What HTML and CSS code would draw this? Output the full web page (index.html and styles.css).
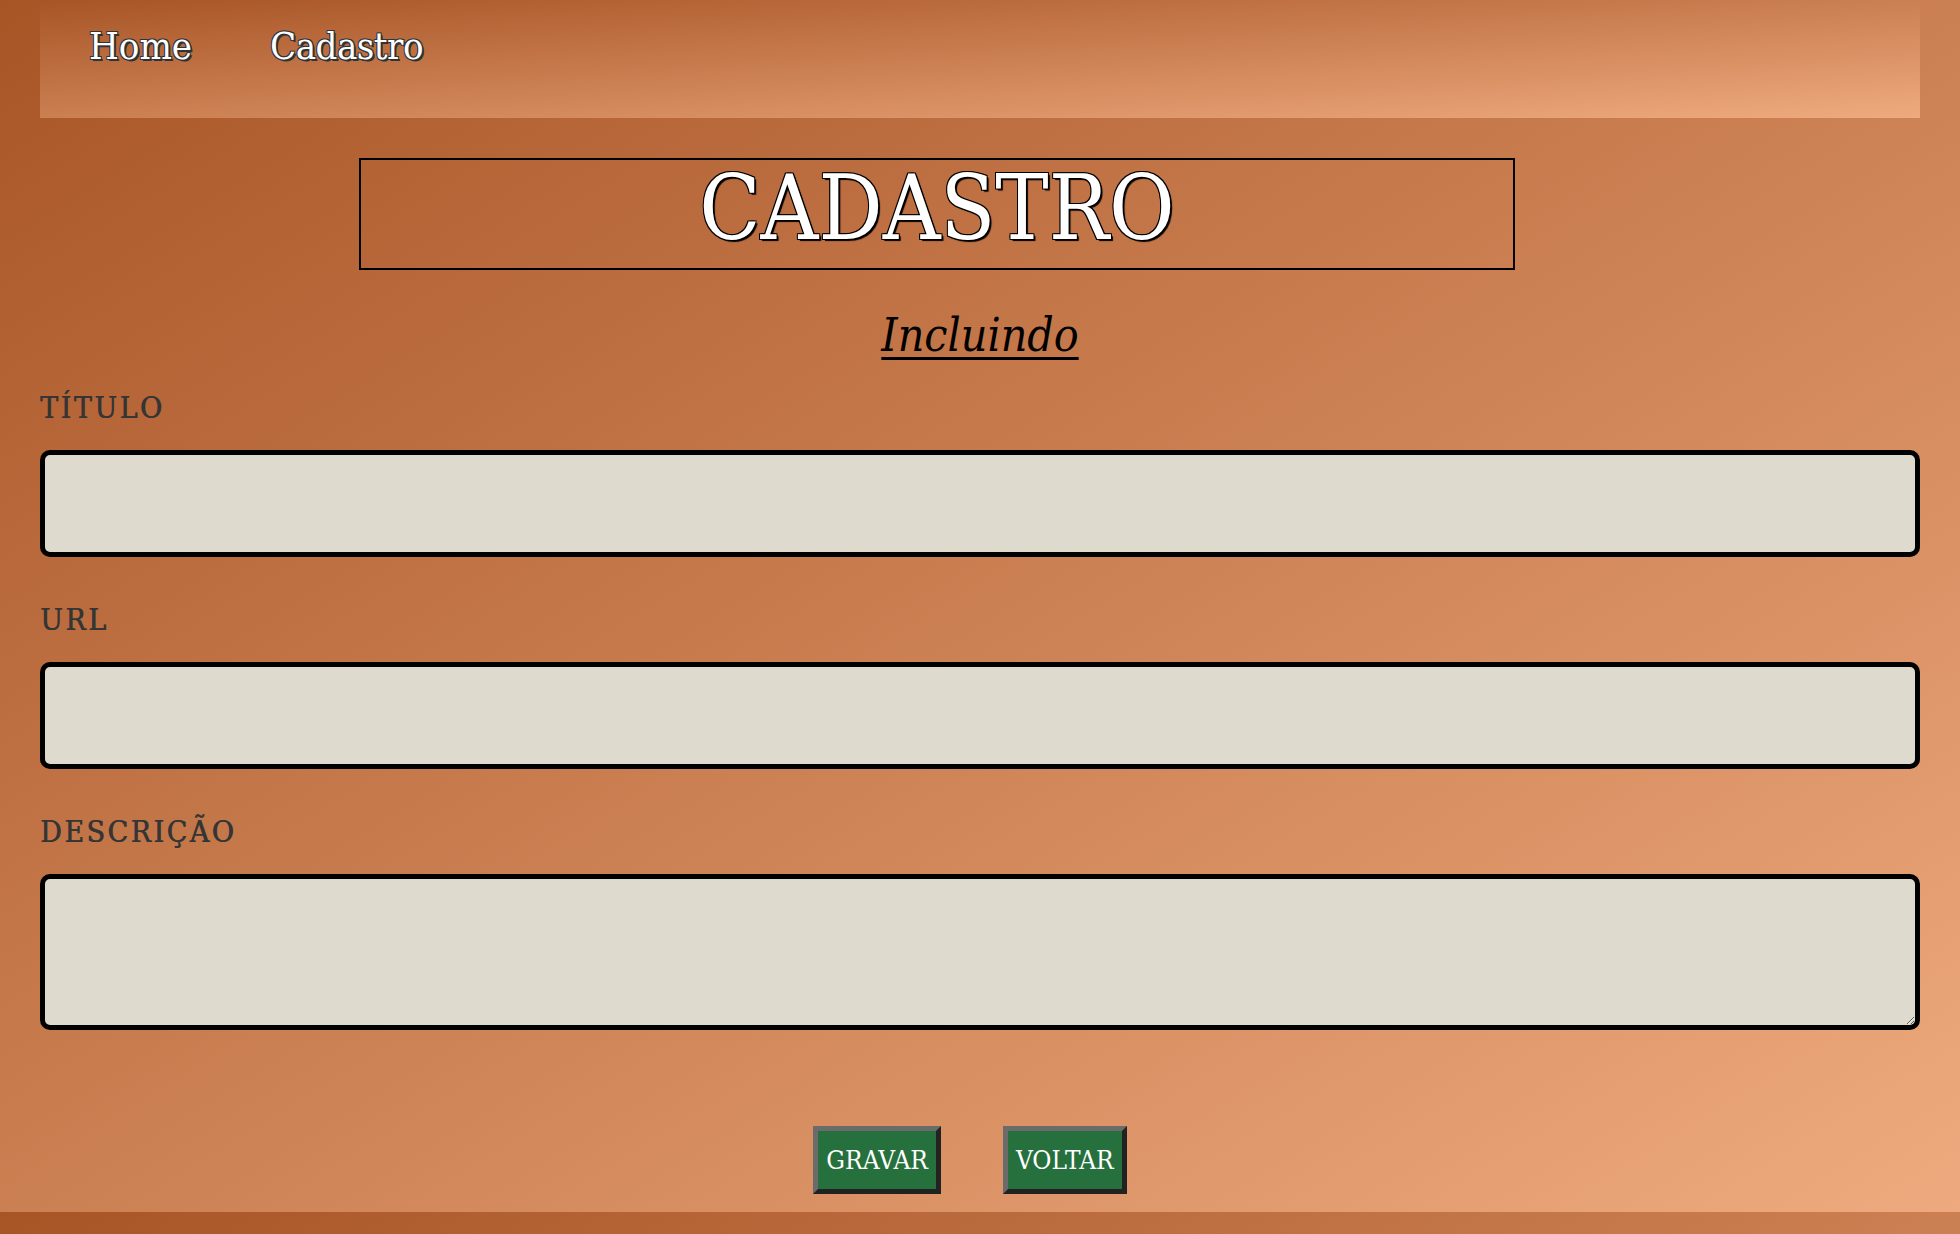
FILE: index.html
```html
<!DOCTYPE html>
<html lang="pt-BR">
<head>
<meta charset="utf-8">
<title>Cadastro</title>
<link rel="stylesheet" href="styles.css">
</head>
<body>
<nav class="topnav">
  <a class="navlink" href="#">Home</a>
  <a class="navlink" href="#">Cadastro</a>
</nav>
<main class="page">
  <div class="titlebox"><h1 class="title">CADASTRO</h1></div>
  <h2 class="mode">Incluindo</h2>
  <form class="form">
    <div class="field">
      <label class="label" for="titulo">TÍTULO</label>
      <input class="input" id="titulo" type="text">
    </div>
    <div class="field">
      <label class="label" for="url">URL</label>
      <input class="input" id="url" type="text">
    </div>
    <div class="field">
      <label class="label" for="descricao">DESCRIÇÃO</label>
      <textarea class="input textarea" id="descricao"></textarea>
    </div>
    <div class="actions">
      <button class="btn" type="button">GRAVAR</button>
      <button class="btn" type="button">VOLTAR</button>
    </div>
  </form>
</main>
</body>
</html>
```
FILE: styles.css
```css
html {
  background: linear-gradient(to bottom right, #a85526, #eeaa7e) 0 0 / 100% 1212px repeat;
}
body {
  margin: 0 40px;
  font-family: "DejaVu Serif Condensed", "DejaVu Serif", serif;
}
.topnav {
  height: 118px;
  display: flex;
  align-items: flex-start;
  gap: 78px;
  padding-left: 49px;
  background: linear-gradient(to bottom right, #a85526, #eeaa7e);
}
.navlink {
  margin-top: 23px;
  font-size: 38px;
  line-height: 46px;
  color: #fff;
  text-decoration: none;
  text-shadow: -1px -1px 0 #2e3338, 1px -1px 0 #2e3338, -1px 1px 0 #2e3338, 1px 1px 0 #2e3338, 2px 2px 0 #2e3338;
}
.navlink + .navlink {
  letter-spacing: -0.5px;
}
.titlebox {
  margin: 40px 0 0 319px;
  width: 1156px;
  height: 112px;
  box-sizing: border-box;
  border: 2px solid #000;
  padding-bottom: 12px;
  text-align: center;
}
.title {
  margin: 0;
  font-size: 89px;
  font-weight: normal;
  line-height: 96px;
  color: #fff;
  text-shadow: -1px -1px 0 #000, 1px -1px 0 #000, -1px 1px 0 #000, 1px 1px 0 #000, 2px 2px 1px #000;
}
.mode {
  margin: 39px 0 0;
  text-align: center;
  font-size: 46px;
  line-height: 52px;
  font-style: italic;
  font-weight: normal;
  color: #000;
  text-decoration: underline;
  text-decoration-thickness: 3px;
  text-underline-offset: 6px;
}
.form {
  margin: 29px 0 0;
}
.field {
  display: flex;
  flex-direction: column;
  gap: 24px;
  margin-bottom: 45px;
}
.label {
  font-size: 30px;
  line-height: 36px;
  letter-spacing: 2.5px;
  color: #353535;
  text-shadow: 0.6px 0 0 #353535;
}
.input {
  display: block;
  box-sizing: border-box;
  width: 100%;
  height: 107px;
  margin: 0;
  border: 5px solid #000;
  border-radius: 10px;
  background: #dedace;
  font: inherit;
}
.textarea {
  height: 156px;
  resize: vertical;
}
.actions {
  display: flex;
  justify-content: center;
  gap: 62px;
  padding-right: 20px;
  margin-top: 96px;
}
.btn {
  height: 68px;
  box-sizing: border-box;
  padding: 0 8px;
  border: 5px solid;
  border-color: #6b6b6b #222 #222 #6b6b6b;
  background: #26703e;
  color: #fff;
  font-family: "DejaVu Serif Condensed", "DejaVu Serif", serif;
  font-size: 26px;
}
```
